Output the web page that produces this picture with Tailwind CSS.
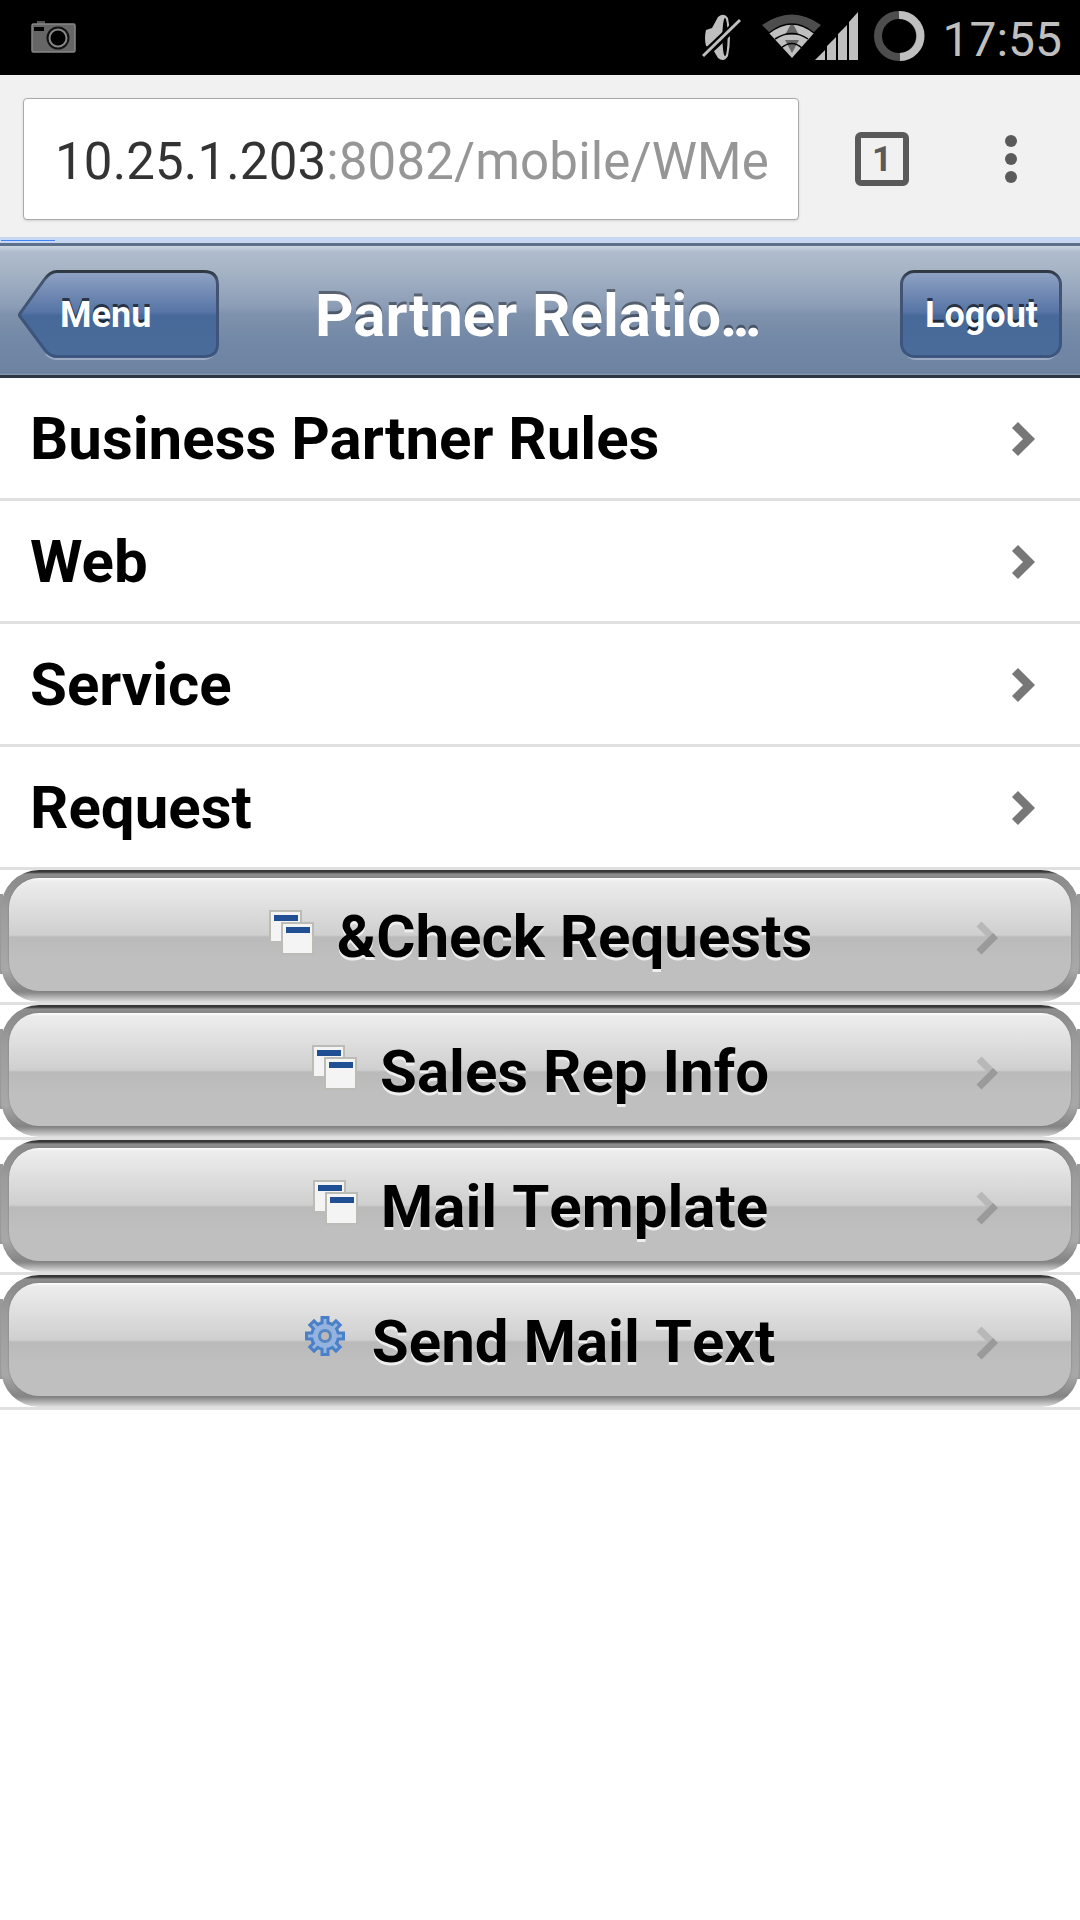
<!DOCTYPE html>
<html lang="en">
<head>
  <meta charset="UTF-8" />
  <meta name="viewport" content="width=device-width, initial-scale=1.0"/>
  <title>Partner Relations</title>
  <script src="https://cdn.jsdelivr.net/npm/@tailwindcss/browser@4"></script>
</head>
<body class="bg-white text-black font-['Roboto',sans-serif] w-[1080px] h-[1920px] overflow-hidden">

  <!-- Status bar -->
  <div class="h-[75px] bg-black flex items-center justify-between">
    <svg class="ml-[30px] mt-[-1px]" width="47" height="34" viewBox="0 0 47 34">
      <rect x="7" y="1" width="8" height="4" fill="#555"/>
      <rect x="2" y="4" width="43" height="28" rx="1.5" fill="#666" stroke="#888" stroke-width="1.5"/>
      <rect x="4" y="7" width="10" height="4" fill="#000"/>
      <circle cx="28" cy="18" r="10.5" fill="#888" stroke="#111" stroke-width="2"/>
      <circle cx="28" cy="18" r="7.5" fill="#000"/>
    </svg>
    <div class="flex items-center">
      <svg width="240" height="75" viewBox="695 0 240 75" fill="#bfbfbf">
        <path d="M706 30L712 28L718 17Q724 12 728 18Q732 37 728 56Q724 63 718 58L712 48L706 46Q704 38 706 30Z"/>
        <ellipse cx="725" cy="37" rx="2.600" ry="19" fill="#000"/>
        <path d="M701 58L741 20" stroke="#000" stroke-width="8"/>
        <path d="M703 56L740 20" stroke="#bfbfbf" stroke-width="3"/>
        <path d="M762 25Q792 4 821 25L813 33Q792 17 770 33Z" fill="#4d4d4d"/>
        <path d="M769 33Q792 15 814 33L792 58Z"/>
        <path d="M792 22L799 35H785ZM785 40H799L792 53Z" fill="#666"/>
        <path d="M769 33Q792 15 814 33M775 39Q792 28 808 39M781 48Q792 39 802 48" fill="none" stroke="#000" stroke-width="1.500"/>
        <path d="M815 60L825 50V60ZM827 46L836 37V60H827ZM838 34L847 25V60H838ZM849 22L858 12V60H849Z"/>
        <circle cx="899" cy="36" r="21" fill="none" stroke="#4d4d4d" stroke-width="8"/>
        <path d="M899 15A21 21 0 0 1 900 57" fill="none" stroke="#bfbfbf" stroke-width="8"/>
      </svg>
      <span class="text-[48px] leading-[75px] text-[#bfbfbf] ml-[7px] mr-[18px] pt-[3px]">17:55</span>
    </div>
  </div>

  <!-- Browser toolbar -->
  <div class="h-[162px] bg-[#f1f1f1] flex items-start pt-[23px] pl-[23px]">
    <div class="w-[776px] h-[122px] bg-white border border-[#aaa] rounded shadow-sm pl-[31px] pt-[6px] flex items-center text-[51px] tracking-[0.15px] text-[#333] whitespace-nowrap">
      <span>10.25.1.203</span><span class="text-[#969696]">:8082/mobile/WMe</span>
    </div>
    <div class="w-[54px] h-[54px] ml-[56px] mt-[34px] border-[6px] border-[#5a5a5a] rounded-[6px] flex items-center justify-center pt-[2px] text-[35px] font-bold text-[#5a5a5a]">1</div>
    <div class="ml-[96px] mt-[37px] flex flex-col gap-[6px]">
      <i class="size-3 bg-[#5a5a5a] rounded-full"></i>
      <i class="size-3 bg-[#5a5a5a] rounded-full"></i>
      <i class="size-3 bg-[#5a5a5a] rounded-full"></i>
    </div>
  </div>
  <div class="h-[6px] bg-[#c8d7f1] pt-[3px] pl-px"><div class="w-[54px] h-px bg-[#4285f4]"></div></div>

  <!-- Header -->
  <header class="h-[135px] border-t-[3px] border-t-[#5c708c] border-b-[3px] border-b-[#2d3642] bg-[linear-gradient(#cad5e0_0px,#b0bccd_6px,#a6b4c5_24px,#8c9db7_60px,#7f92ad_68px,#7288a6_95px,#6d83a1_127px,#8a9cb8_129px)] flex items-start pt-6 pl-[18px] pr-[18px] text-white">
    <div class="relative w-[201px] h-[90px]">
      <svg class="absolute inset-0" width="201" height="90" viewBox="0 0 201 90">
        <defs>
          <linearGradient id="blue" x1="0" y1="0" x2="0" y2="1">
            <stop offset="0" stop-color="#90a3c4"/><stop offset=".48" stop-color="#5674a5"/><stop offset=".52" stop-color="#476999"/><stop offset="1" stop-color="#4a6c9b"/>
          </linearGradient>
          <linearGradient id="edge" x1="0" y1="0" x2="0" y2="1">
            <stop offset="0" stop-color="#2f3742"/><stop offset=".1" stop-color="#44546f"/><stop offset="1" stop-color="#3b557f"/>
          </linearGradient>
        </defs>
        <path d="M28 84Q33 89 39 89H187Q195 88 199 80" fill="none" stroke="#9dabc3" stroke-width="2"/>
        <path d="M1 45L26 10Q32 1.500 39 1.500H186Q199.500 1.500 199.500 15V74Q199.500 86.500 186 86.500H39Q32 86.500 27 80Z" fill="url(#blue)" stroke="url(#edge)" stroke-width="3"/>
      </svg>
      <span class="absolute left-[42px] top-[24px] text-[36px] leading-[42px] font-bold [text-shadow:0_-3px_0_rgba(0,0,0,0.6)]">Menu</span>
    </div>
    <h1 class="text-[60px] leading-[70px] font-bold ml-[96px] pt-[11px] flex-1 whitespace-nowrap [text-shadow:0_-3px_0_rgba(0,0,0,0.4)]">Partner Relati<span class="tracking-[-1px]">o</span><span class="tracking-[-5px]">...</span></h1>
    <div class="relative w-[162px] h-[90px]">
      <svg class="absolute inset-0" width="162" height="90" viewBox="0 0 162 90">
        <path d="M4 80Q8 89 16 89H146Q154 89 158 80" fill="none" stroke="#9dabc3" stroke-width="2"/>
        <rect x="1.500" y="1.500" width="159" height="85" rx="13" fill="url(#blue)" stroke="url(#edge)" stroke-width="3"/>
      </svg>
      <span class="absolute left-[25px] top-[24px] text-[36px] leading-[42px] font-bold [text-shadow:0_-3px_0_rgba(0,0,0,0.6)]">Logout</span>
    </div>
  </header>

  <!-- Menu list -->
  <ul class="text-[60px] font-bold" id="list"></ul>

  <script>
    const windows = `<svg width="48" height="48" viewBox="0 0 48 48" class="mr-[21px] mt-[-3px]">
      <rect x="2" y="2" width="31" height="31" fill="#f4f4f4" stroke="#bbbcb5" stroke-width="2"/>
      <rect x="6" y="6" width="24" height="6" fill="#204f93"/>
      <rect x="14" y="14" width="31" height="31" fill="#f4f4f4" stroke="#bbbcb5" stroke-width="2"/>
      <rect x="18" y="18" width="24" height="6" fill="#204f93"/>
    </svg>`;
    const gear = `<svg width="40" height="42" viewBox="-20 -21 40 42" class="mr-[27px] mt-[-8px]">
      <g fill="#4a80c8"><circle r="15"/>
        <g id="teeth"><rect x="-4.500" y="-20" width="9" height="40"/><rect x="-20" y="-4.500" width="40" height="9"/></g>
        <use href="#teeth" transform="rotate(45)"/>
      </g>
      <g fill="#94b3df"><circle r="12"/>
        <g id="inner"><rect x="-1.500" y="-17" width="3" height="34"/><rect x="-17" y="-1.500" width="34" height="3"/></g>
        <use href="#inner" transform="rotate(45)"/>
      </g>
      <circle r="5.500" fill="#b8b8b8" stroke="#5585c6" stroke-width="3"/>
    </svg>`;

    const rows = ['Business Partner Rules', 'Web', 'Service', 'Request'];
    const buttons = [[windows, '&amp;Check Requests'], [windows, 'Sales Rep Info'], [windows, 'Mail Template'], [gear, 'Send Mail Text']];

    document.getElementById('list').innerHTML =
      rows.map(t => `
        <li class="h-[123px] border-b-[3px] border-[#e0e0e0] flex items-center justify-between pl-[30px] pr-[43px]">
          <span class="pt-[2px]">${t}</span>
          <svg class="mt-[2px]" width="26" height="38" viewBox="0 0 26 38"><path d="M4 5L18 19L4 33" fill="none" stroke="#777" stroke-width="8.500"/></svg>
        </li>`).join('') +
      buttons.map(([icon, t]) => `
        <li class="relative h-[135px] border-b-[3px] border-[#e0e0e0]">
          <div class="absolute inset-x-0 top-[24px] h-[80px] border-x-[3px] border-[#999]"></div>
          <div class="relative h-[132px] mx-[1px] rounded-[38px] bg-[linear-gradient(#383838_0px,#383838_2px,#8c8c8c_4px,#8c8c8c_10px,#9c9c9c_40px,#a8a8a8_100px,#858585_121px,#8c8c8c_123px,#e0e0e0_132px)] pt-[8px] px-[8px]">
            <div class="h-[113px] rounded-[30px] bg-[linear-gradient(#fff_0px,#ededed_3px,#cfcfcf_57px,#bababa_59px,#bfbfbf_80px,#bfbfbf_113px)] shadow-[0_0_2px_#777] flex items-center justify-center [text-shadow:0_3px_0_#eee] [font-kerning:none]">
              ${icon}<span class="pt-[5px]">${t}</span>
            </div>
          </div>
          <svg class="absolute left-[975px] top-[49px]" width="26" height="38" viewBox="0 0 26 38" fill="none" stroke-width="7">
            <path d="M4 5L18 19" stroke="#b8b8b8"/><path d="M20.500 16.500L4 33" stroke="#9a9a9a"/>
          </svg>
        </li>`).join('');
  </script>
</body>
</html>
